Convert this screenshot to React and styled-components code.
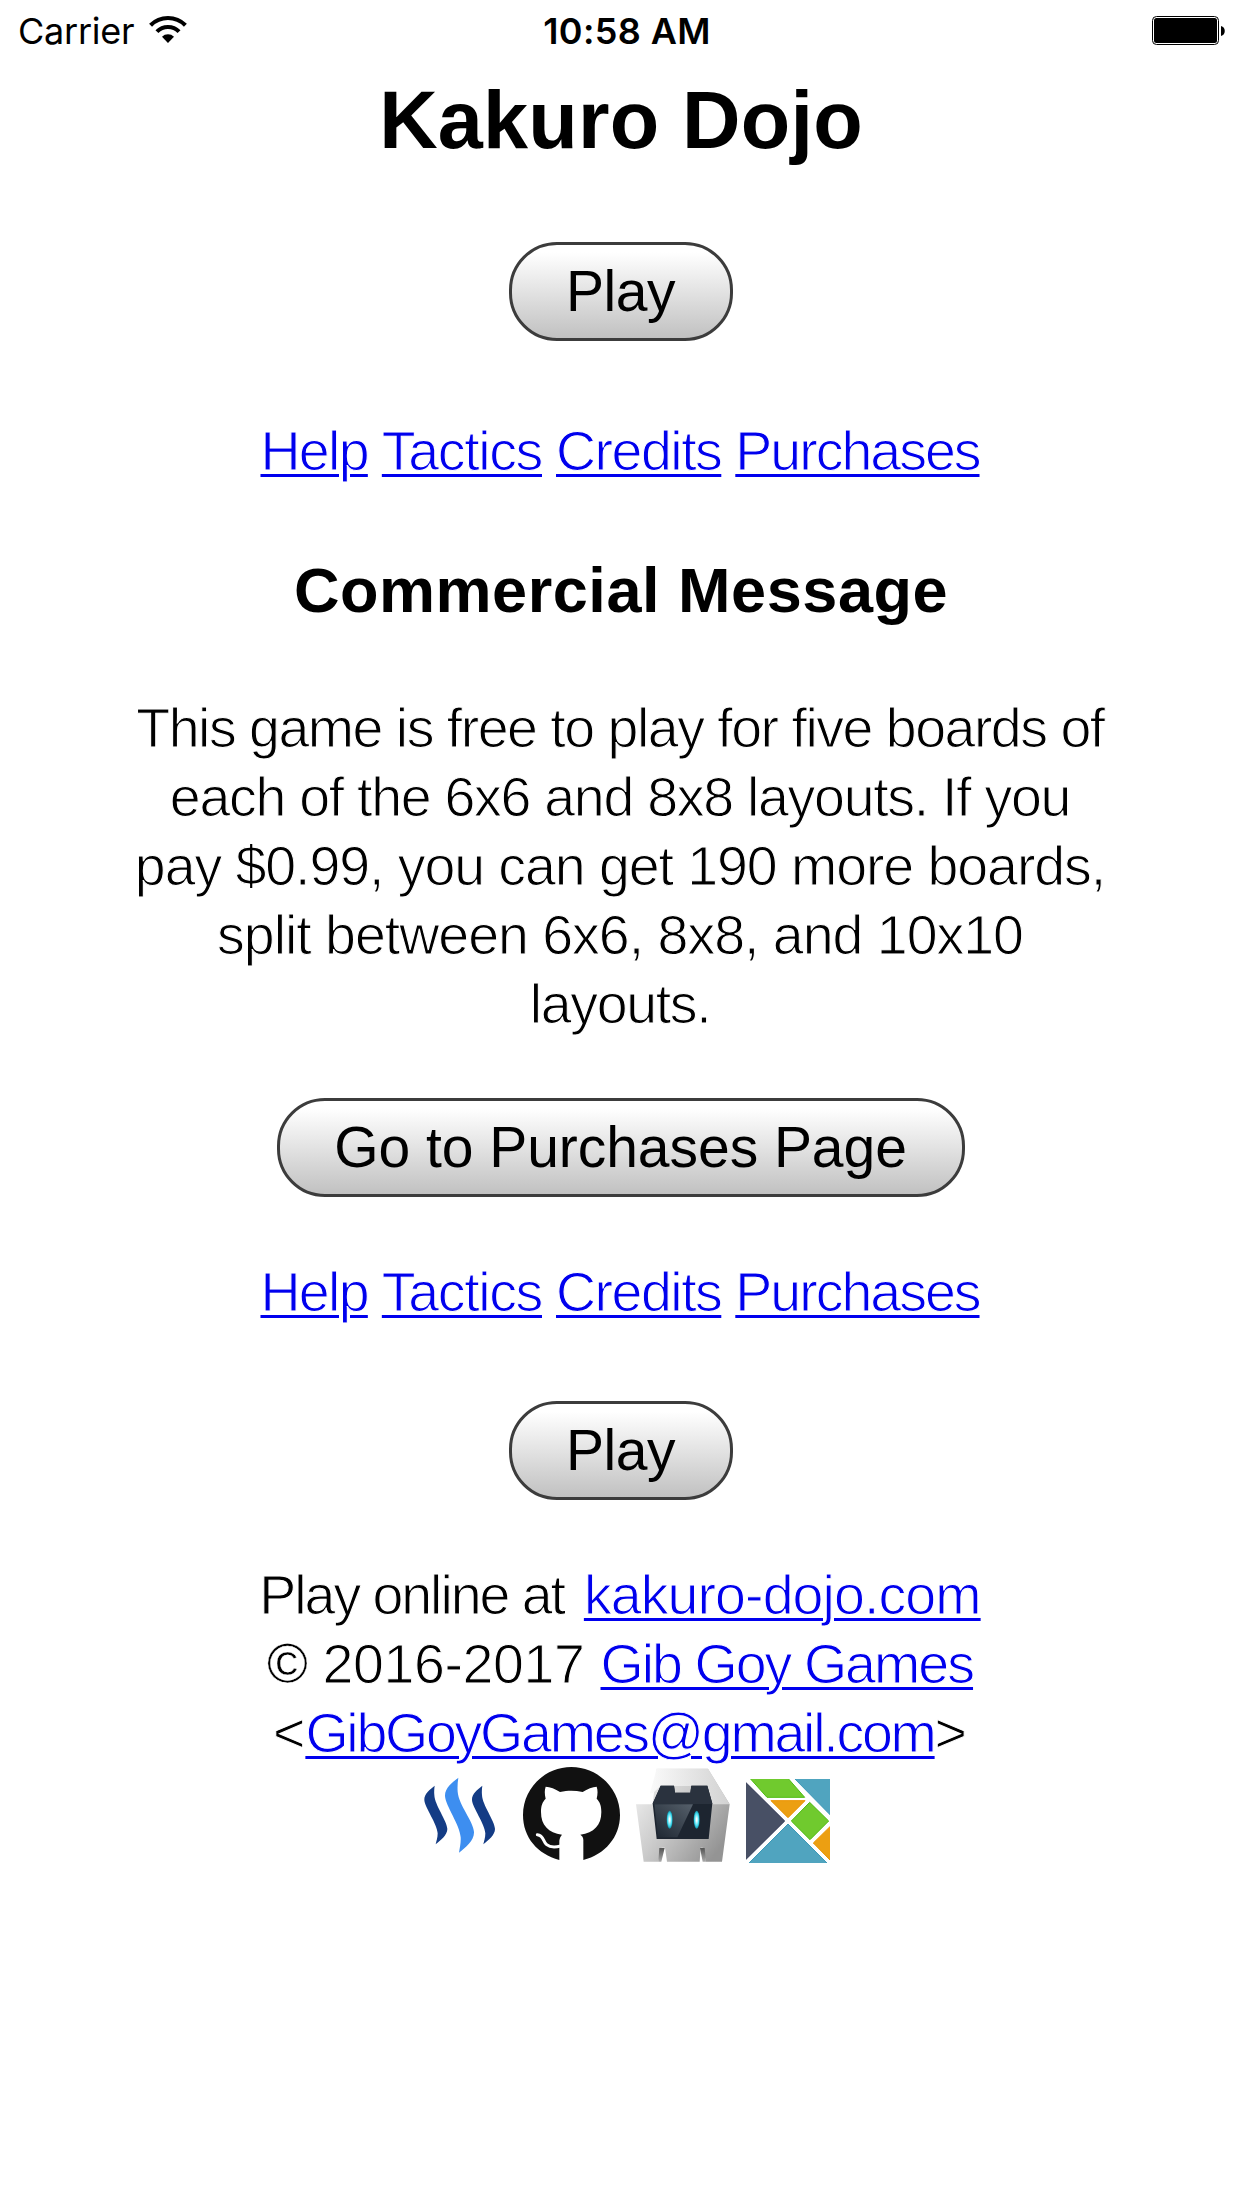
import React from "react";
import styled, { createGlobalStyle } from "styled-components";

const GlobalStyle = createGlobalStyle`
  body {
    margin: 0;
    background: #fff;
    color: #000;
    font-family: "Liberation Sans", Arial, sans-serif;
  }
`;

const Screen = styled.div`
  min-height: 2208px;
  display: flex;
  flex-direction: column;
`;

const StatusBar = styled.header`
  box-sizing: border-box;
  height: 62px;
  padding: 0 17px 0 18px;
  display: grid;
  grid-template-columns: 1fr auto 1fr;
  align-items: center;
  font: 400 36px/62px Inter, sans-serif;
`;

const Carrier = styled.div`
  display: flex;
  align-items: center;
  gap: 15px;
  letter-spacing: -0.24px;
`;

const Time = styled.div`
  font-weight: 600;
  letter-spacing: 0.37px;
  padding-left: 11px;
`;

const WifiIcon = styled.svg`
  width: 38.3px;
  height: 28.7px;
  margin-top: -3px;
`;

const BatteryIcon = styled.svg`
  width: 73px;
  height: 29px;
  justify-self: end;
  margin-top: -1px;
`;

const Main = styled.main`
  display: flex;
  flex-direction: column;
  align-items: center;
`;

const Title = styled.h1`
  margin: 13px 0 0;
  font-size: 81px;
  line-height: 90px;
  letter-spacing: 0.195px;
`;

const Subtitle = styled.h2`
  margin: 68px 0 68px;
  font-size: 63px;
  line-height: 72px;
  letter-spacing: 0.55px;
`;

const Button = styled.button`
  box-sizing: border-box;
  width: ${(p) => p.$width}px;
  height: 99px;
  margin-top: ${(p) => p.$top}px;
  padding: 0 1px 0 0;
  border: 3px solid #3c3c3c;
  border-radius: 48px;
  background: linear-gradient(#fff 8%, #c1c1c1);
  color: #000;
  font: 400 57px/93px "Liberation Sans", Arial, sans-serif;
  letter-spacing: ${(p) => p.$tracking}px;
`;

/* The white stroke pares the regular weight down to a light one. */
const LightText = styled.div`
  padding-right: 2px;
  font-size: 55.5px;
  line-height: 69px;
  white-space: pre;
  -webkit-text-stroke: 1.05px #fff;
`;

const LinkRow = styled(LightText)`
  display: flex;
  gap: 14px;
  margin-top: ${(p) => p.$top}px;
`;

const Line = styled(LightText)`
  display: flex;
  justify-content: center;
  gap: ${(p) => p.$gap || 0}px;
`;

const Run = styled.span`
  letter-spacing: ${(p) => p.$tracking || 0}px;
`;

const Mark = styled.span`
  -webkit-text-stroke-width: 0.4px;
`;

const Link = styled.a`
  color: #00e;
  letter-spacing: ${(p) => p.$tracking}px;
  text-decoration: underline #00e;
  text-decoration-thickness: 3px;
  text-underline-offset: 4px;
`;

const Message = styled.section``;

const Footer = styled.footer`
  margin-top: 61px;
`;

const Logos = styled.div`
  display: flex;
  justify-content: center;
  align-items: flex-end;
  gap: 15px;
  margin-top: -2px;
`;

const Logo = styled.svg`
  display: block;
  width: ${(p) => p.$w}px;
  height: ${(p) => p.$h}px;
`;

function NavLinks({ top }) {
  return (
    <LinkRow as="nav" $top={top}>
      <Link href="#help" $tracking={-1.7}>Help</Link>
      <Link href="#tactics" $tracking={-1.35}>Tactics</Link>
      <Link href="#credits" $tracking={-1.5}>Credits</Link>
      <Link href="#purchases" $tracking={-2.0}>Purchases</Link>
    </LinkRow>
  );
}

const message = [
  ["This game is free to play for five boards of", -1.5],
  ["each of the 6x6 and 8x8 layouts. If you", -1.28],
  ["pay $0.99, you can get 190 more boards,", -1.07],
  ["split between 6x6, 8x8, and 10x10", -1.01],
  ["layouts.", -1.35],
];

function SteemLogo() {
  const side =
    "M104 107C90 118 72 131 73 150C74 172 112 222 113 250C113 264 109 272 107 283C122 271 142 255 142 237C141 212 104 165 103 135C102 124 103 115 104 107Z";
  return (
    <Logo $w={96} $h={96} viewBox="36 51 288 288">
      <path d={side} fill="#143c85" />
      <path d={side} fill="#143c85" transform="translate(143 0)" />
      <path
        d="M175 83C158 96 134 114 135 138C137 168 180 225 182 262C183 280 179 293 177 308C197 292 223 272 222 246C221 215 176 165 173 125C172 110 173 97 175 83Z"
        fill="#3d8ef0"
      />
    </Logo>
  );
}

/* Mark with the tail drawn as a thin white curl and a solid gap below the head. */
function GithubLogo() {
  return (
    <Logo $w={97} $h={97} viewBox="369 48 291 291">
      <path
        fill="#111"
        d="M478 330C412 312 369 262 369 195C369 116 434 51 514 51C594 51 660 116 660 195C660 262 614 314 550 330V270C550 262 546 257 541 254C582 248 604 226 604 186C604 168 600 156 590 146C593 134 594 122 590 110C578 110 562 117 548 126C524 121 504 121 480 126C466 117 450 110 437 110C433 122 434 134 437 146C427 156 423 168 423 186C423 226 445 248 486 254C482 258 479 264 478 272Z"
      />
      <path
        fill="none"
        stroke="#fff"
        strokeWidth="9"
        strokeLinecap="round"
        d="M412 254C432 256 428 274 440 284C450 292 466 292 482 288"
      />
    </Logo>
  );
}

function CordovaLogo() {
  return (
    <Logo $w={96} $h={96} viewBox="45 51 288 288">
      <defs>
        <linearGradient id="shell" x1="0" y1="0" x2="1" y2="0.7">
          <stop offset="0" stopColor="#f6f6f6" />
          <stop offset="0.5" stopColor="#cbcbcb" />
          <stop offset="1" stopColor="#949494" />
        </linearGradient>
        <linearGradient id="roof" x1="0" y1="0" x2="1" y2="0">
          <stop offset="0" stopColor="#fafafa" />
          <stop offset="1" stopColor="#d2d2d2" />
        </linearGradient>
        <linearGradient id="legShade" x1="0" y1="0" x2="0" y2="1">
          <stop offset="0" stopColor="#555" />
          <stop offset="1" stopColor="#aaa" />
        </linearGradient>
        <linearGradient id="gloss" x1="0" y1="1" x2="1" y2="0">
          <stop offset="0" stopColor="#1d2631" />
          <stop offset="1" stopColor="#56606b" />
        </linearGradient>
        <radialGradient id="eye">
          <stop offset="0.15" stopColor="#f2ffff" />
          <stop offset="0.7" stopColor="#3fd9ee" />
          <stop offset="1" stopColor="#128a9e" />
        </radialGradient>
      </defs>
      <path
        fill="url(#shell)"
        d="M110 56H264L329 163L306 335H258L248 293H242L239 335H141L135 293H125L115 335H71L48 163H98Z"
      />
      <path fill="url(#roof)" d="M110 56H264L329 163H277L262 108H122L98 130H90Z" />
      <path fill="url(#legShade)" d="M115 335L118 294H134L124 335ZM258 335L254 294H240L248 335Z" />
      <path
        fill="#1d2530"
        d="M122 107H162L165 128H211L214 107H262L277 160L266 267H110L98 160Z"
      />
      <path fill="#2a323e" d="M122 107H162L165 128H211L214 107H262L277 162H98Z" />
      <path fill="url(#gloss)" d="M103 163H219L172 262H114Z" />
      <ellipse cx="149" cy="209" rx="9" ry="27" fill="url(#eye)" />
      <ellipse cx="230" cy="209" rx="9" ry="27" fill="url(#eye)" />
    </Logo>
  );
}

function ElmLogo() {
  return (
    <Logo $w={84} $h={84} viewBox="378 87 252 252">
      <g strokeWidth="3">
        <path fill="#485065" stroke="#2c3350" d="M376 96L494 213L376 330Z" />
        <path fill="#70ca2e" stroke="#4dbb12" d="M390 85H504L554 142H441Z" />
        <path fill="#50a4bf" stroke="#3c99b8" d="M523 85H634V198Z" />
        <path fill="#ec9f12" stroke="#ea9300" d="M453 152H555L504 203Z" />
        <path fill="#70ca2e" stroke="#4dbb12" d="M569 157L626 213L570 269L514 213Z" />
        <path fill="#ec9f12" stroke="#ea9300" d="M632 228V332L580 279Z" />
        <path fill="#50a4bf" stroke="#3c99b8" d="M504 222L623 341H385Z" />
      </g>
    </Logo>
  );
}

export default function App() {
  return (
    <Screen>
      <GlobalStyle />
      <StatusBar>
        <Carrier>
          <span>Carrier</span>
          <WifiIcon viewBox="448 45 115 86">
            <path
              d="M452.7 75.7A74 74 0 0 1 557.3 75.7M471.8 94.8A47 47 0 0 1 538.2 94.8"
              fill="none"
              stroke="#000"
              strokeWidth="12.5"
            />
            <path d="M487 110A26 26 0 0 1 523 110L505 129Z" />
          </WifiIcon>
        </Carrier>
        <Time>10:58 AM</Time>
        <BatteryIcon viewBox="0 0 73 29">
          <rect x="0.5" y="0.5" width="66" height="28" rx="4" fill="none" stroke="#000" />
          <rect x="2" y="2" width="63" height="25" rx="2.5" />
          <path d="M69 10C74 11 74 19 69 20Z" />
        </BatteryIcon>
      </StatusBar>
      <Main>
        <Title>Kakuro Dojo</Title>
        <Button $width={224} $top={77} $tracking={-0.46}>Play</Button>
        <NavLinks top={76} />
        <Subtitle>Commercial Message</Subtitle>
        <Message>
          {message.map(([text, tracking]) => (
            <Line key={text}>
              <Run $tracking={tracking}>{text}</Run>
            </Line>
          ))}
        </Message>
        <Button $width={688} $top={59} $tracking={-0.04}>Go to Purchases Page</Button>
        <NavLinks top={61} />
        <Button $width={224} $top={74} $tracking={-0.46}>Play</Button>
        <Footer>
          <Line $gap={20}>
            <Run $tracking={-2.05}>Play online at</Run>
            <Link href="#site" $tracking={-0.9}>kakuro-dojo.com</Link>
          </Line>
          <Line $gap={16}>
            <Run $tracking={-0.38}><Mark>©</Mark> 2016-2017</Run>
            <Link href="#games" $tracking={-1.95}>Gib Goy Games</Link>
          </Line>
          <Line>
            <Run>&lt;</Run>
            <Link href="#mail" $tracking={-2.24}>GibGoyGames@gmail.com</Link>
            <Run>&gt;</Run>
          </Line>
          <Logos>
            <SteemLogo />
            <GithubLogo />
            <CordovaLogo />
            <ElmLogo />
          </Logos>
        </Footer>
      </Main>
    </Screen>
  );
}
